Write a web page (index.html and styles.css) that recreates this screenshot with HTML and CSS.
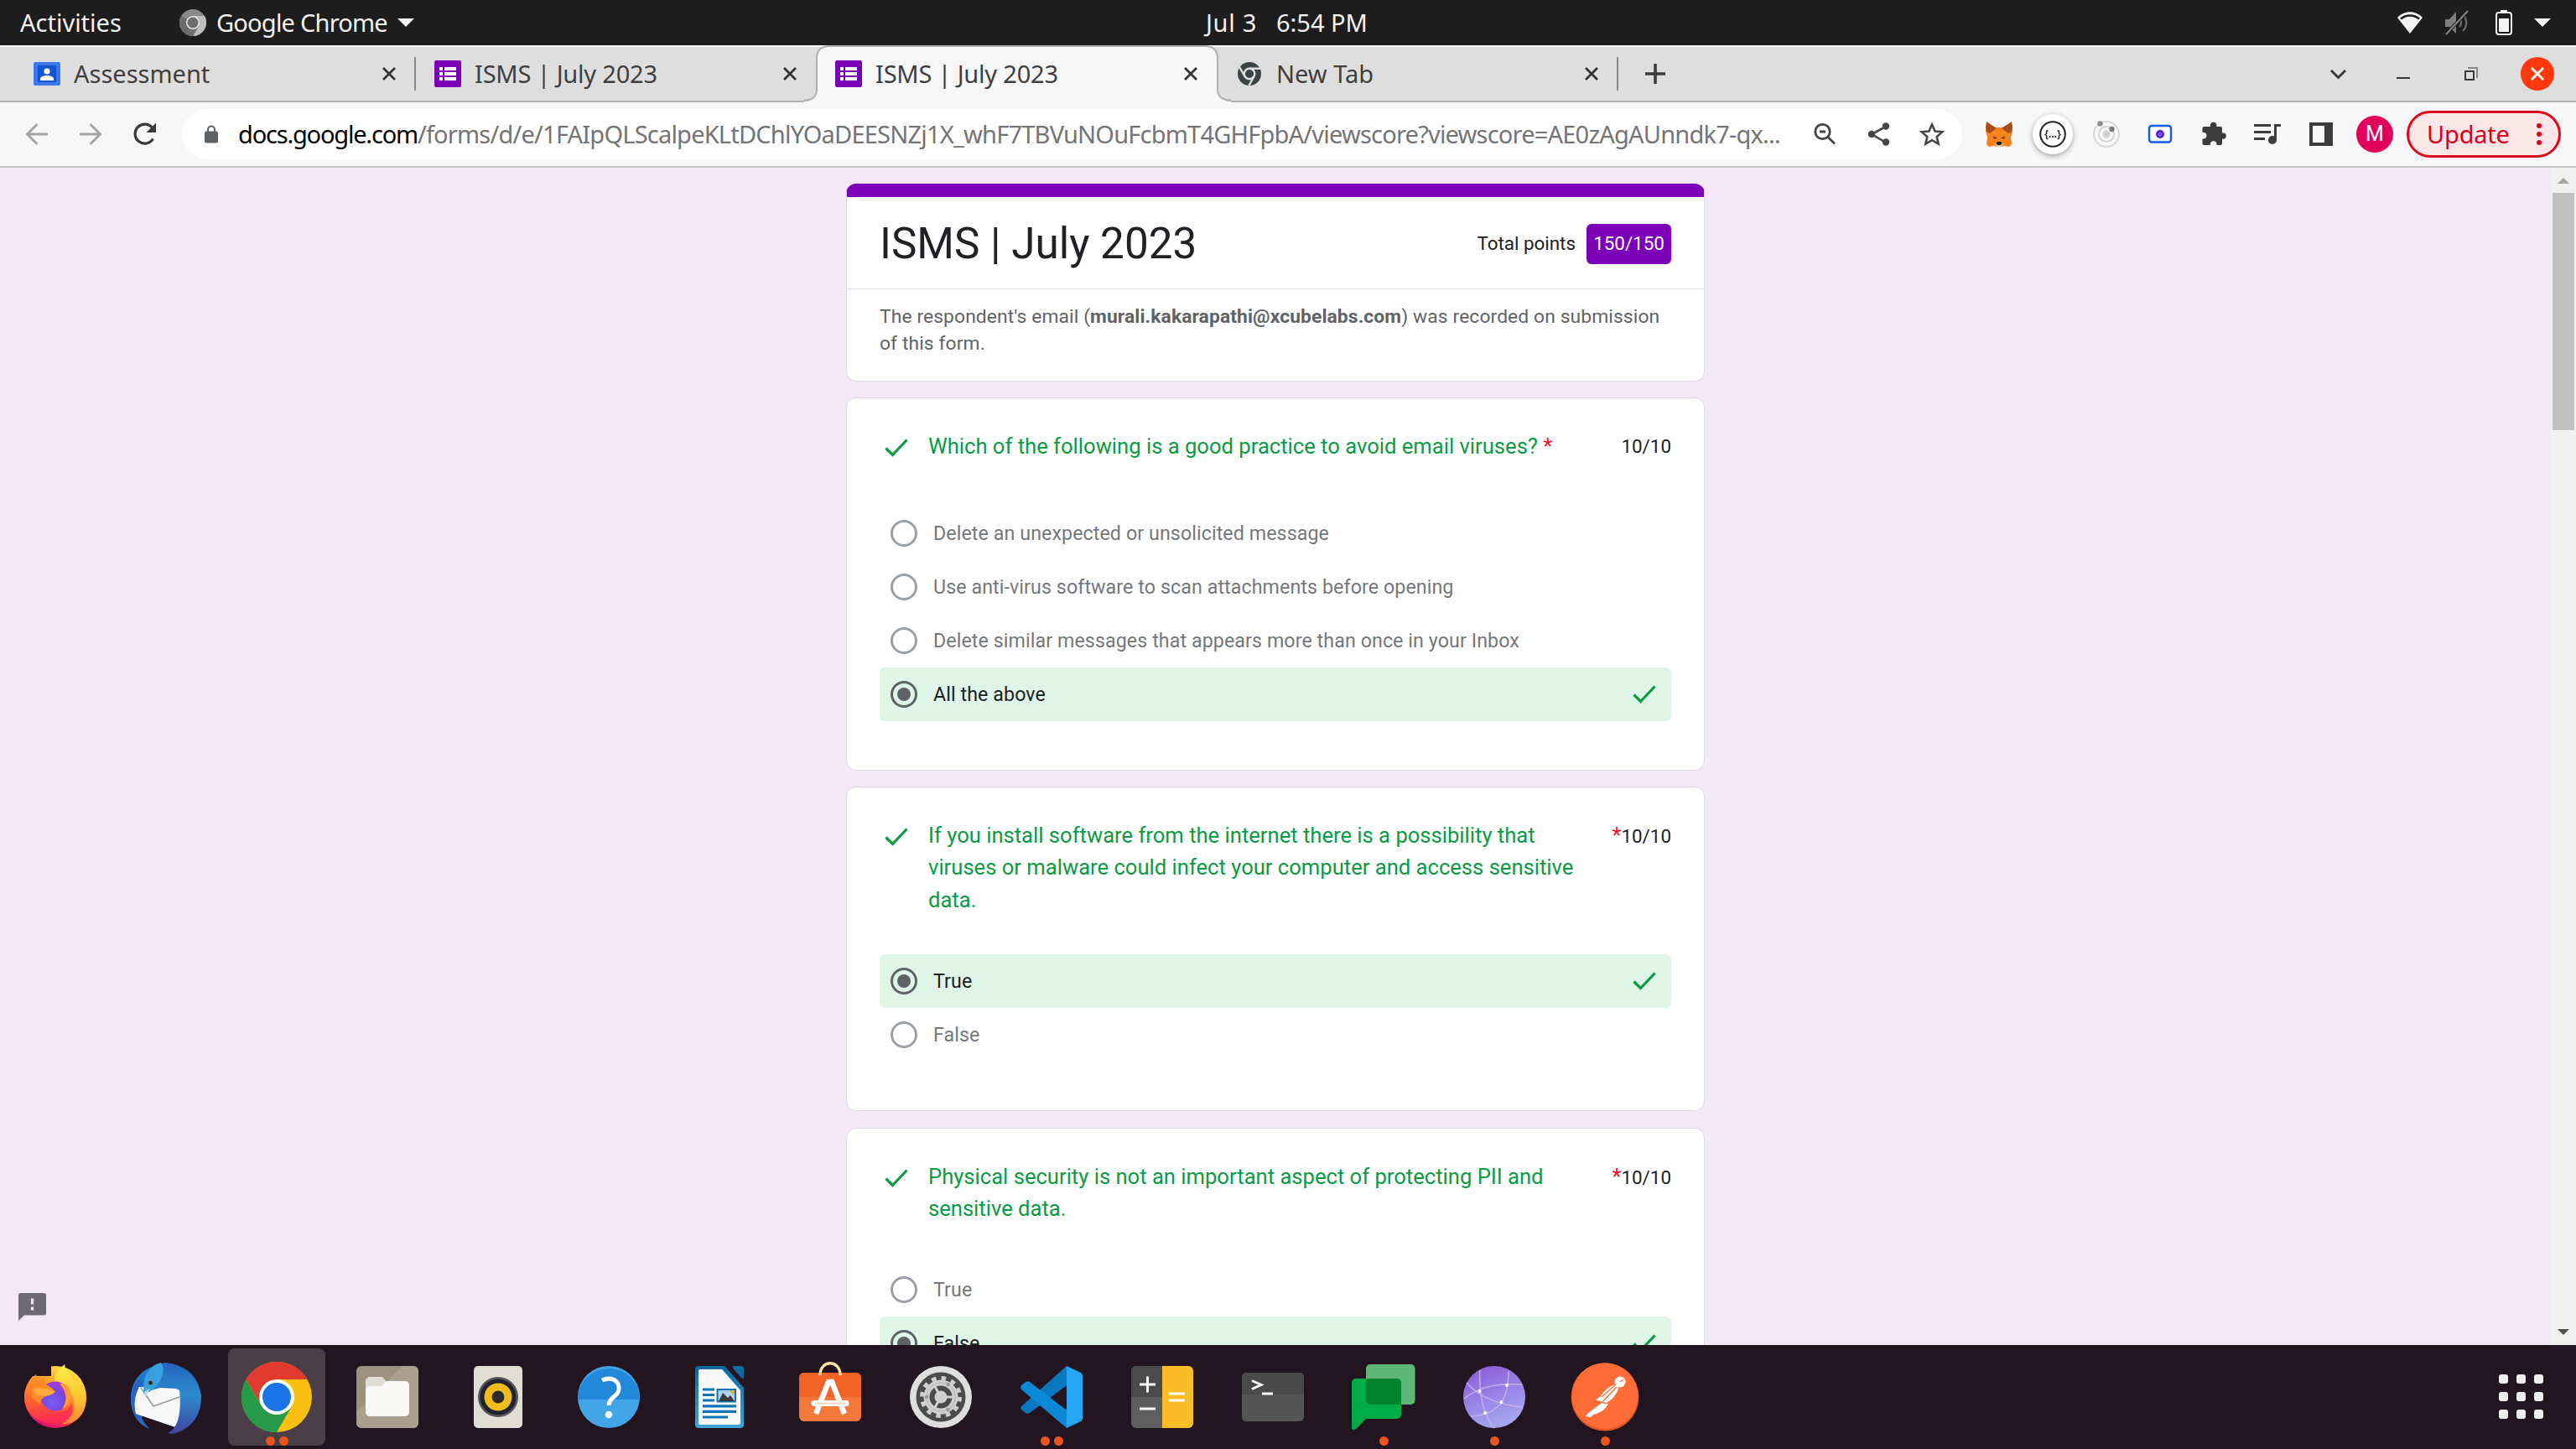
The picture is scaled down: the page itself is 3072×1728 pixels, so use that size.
FILE: index.html
```html
<!DOCTYPE html>
<html lang="en">
<head>
<meta charset="utf-8">
<title>ISMS | July 2023</title>
<link rel="stylesheet" href="styles.css">
</head>
<body>
<svg class="defs" width="0" height="0" aria-hidden="true">
  <defs>
    <symbol id="i-x" viewBox="0 0 18 18"><path d="M2 2l14 14M16 2L2 16" fill="none" stroke="currentColor" stroke-width="2.8"/></symbol>
    <symbol id="i-form" viewBox="0 0 32 32"><rect width="32" height="32" rx="2" fill="#7b00b8"/><path d="M6 8h4v4H6zM12 8h14v4H12zM6 14h4v4H6zM12 14h14v4H12zM6 20h4v4H6zM12 20h14v4H12z" fill="#fff"/></symbol>
    <symbol id="i-check" viewBox="0 0 28 22"><path d="M1.500 11.500l8 8L26.500 1.500" fill="none" stroke="#0b9b42" stroke-width="3.200"/></symbol>
    <symbol id="i-chrome" viewBox="-42 -42 84 84"><circle r="42" fill="#fbbf10"/><path d="M-36.400-21A42 42 0 0 1 36.400-21H0L-18.200 10.500Z" fill="#e23a2e"/><path d="M-36.400-21L-18.200 10.500H18.200L0 42A42 42 0 0 1-36.400-21Z" fill="#27994a"/><circle r="21" fill="#fff"/><circle r="17" fill="#1b73e8"/></symbol>
    <linearGradient id="g-fox" x1="0.800" y1="0" x2="0.300" y2="1"><stop offset="0" stop-color="#fff04a"/><stop offset=".35" stop-color="#ffa52c"/><stop offset=".7" stop-color="#ff4a3c"/><stop offset="1" stop-color="#e3067a"/></linearGradient>
    <linearGradient id="g-foxl" x1="0" y1="0" x2="0.200" y2="1"><stop offset="0" stop-color="#ffa41c"/><stop offset=".6" stop-color="#ff5a35"/><stop offset="1" stop-color="#ff2f52"/></linearGradient>
    <linearGradient id="g-flame" x1="0" y1="0" x2="0" y2="1"><stop offset="0" stop-color="#fff04c"/><stop offset=".6" stop-color="#ffc02e"/><stop offset="1" stop-color="#ff7d3c"/></linearGradient>
    <radialGradient id="g-globe" cx=".4" cy=".7" r=".8"><stop offset="0" stop-color="#7a5cf8"/><stop offset=".5" stop-color="#7447dc"/><stop offset="1" stop-color="#b833e0"/></radialGradient>
    <linearGradient id="g-bird" x1="0" y1="0" x2="1" y2="1"><stop offset="0" stop-color="#1f86d8"/><stop offset=".5" stop-color="#2160bd"/><stop offset="1" stop-color="#3b4aa5"/></linearGradient>
    <linearGradient id="g-wing" x1="0" y1="0" x2="0" y2="1"><stop offset="0" stop-color="#2563bd"/><stop offset=".45" stop-color="#2d8ccd"/><stop offset="1" stop-color="#4043a0"/></linearGradient>
    <linearGradient id="g-web" x1="0" y1="0" x2=".4" y2="1"><stop offset="0" stop-color="#8c55d9"/><stop offset="1" stop-color="#a3a5ee"/></linearGradient>
    <linearGradient id="g-doc" x1="0" y1="0" x2="0" y2="1"><stop offset="0" stop-color="#0b669f"/><stop offset="1" stop-color="#3fa4d6"/></linearGradient>
  </defs>
</svg>

<header class="panel">
  <span class="panel-activities">Activities</span>
  <svg class="panel-chrome" width="32" height="32" viewBox="-16 -16 32 32"><circle r="16" fill="#8a8a8a"/><path d="M0-8H13.900A16 16 0 0 1 0 16L7 4Z" fill="#bdbdbd"/><path d="M-13.900-8A16 16 0 0 0 0 16L7 4Z" fill="#6c6c6c"/><circle r="8" fill="#e6e6e6"/><circle r="6.500" fill="#6d6d6d"/></svg>
  <span class="panel-app">Google Chrome</span>
  <span class="triangle"></span>
  <span class="panel-clock"><span class="date">Jul 3</span><span class="time">6:54 PM</span></span>
  <span class="panel-status">
    <svg width="30" height="26" viewBox="0 0 30 26"><path d="M0 7C8-2 22-2 30 7L15 26Z" fill="#f2f2f2"/><path d="M4 8.500C10 3 20 3 26 8.500" fill="none" stroke="#1d1d1d" stroke-width="2.500"/></svg>
    <svg width="30" height="30" viewBox="0 0 30 30"><path d="M1 11h5l8-9v26l-8-8H1z" fill="#7d7d7d"/><path d="M18 10a7 7 0 0 1 0 10M22 5a14 14 0 0 1 0 20" fill="none" stroke="#6d6d6d" stroke-width="2.200"/><path d="M28 1L2 29" stroke="#1d1d1d" stroke-width="4"/><path d="M28 1L2 29" stroke="#858585" stroke-width="2"/></svg>
    <svg width="20" height="30" viewBox="0 0 20 30"><rect x="6" y="0" width="8" height="4" fill="#f2f2f2"/><rect x="1" y="3" width="18" height="26" rx="3" fill="none" stroke="#f2f2f2" stroke-width="2"/><rect x="4" y="10" width="12" height="16" fill="#f2f2f2"/></svg>
    <span class="triangle"></span>
  </span>
</header>

<nav class="tabs">
  <div class="tab">
    <svg class="fav" width="32" height="28" viewBox="0 0 32 28"><rect width="32" height="28" rx="2" fill="#3b78f0"/><rect x="5" y="4" width="22" height="20" fill="#1556d0"/><circle cx="16" cy="11" r="3.600" fill="#fff"/><path d="M8 22v-2c0-3 5-4 8-4s8 1 8 4v2z" fill="#fff"/></svg>
    <span class="tab-title">Assessment</span>
    <svg class="tab-x" width="18" height="18"><use href="#i-x"/></svg>
    <i class="sep"></i>
  </div>
  <div class="tab">
    <svg class="fav" width="32" height="32"><use href="#i-form"/></svg>
    <span class="tab-title tight">ISMS | July 2023</span>
    <svg class="tab-x" width="18" height="18"><use href="#i-x"/></svg>
  </div>
  <div class="tab tab-on">
    <svg class="tab-shape" width="510" height="68" viewBox="0 0 510 68"><path d="M0 67C12 67 15 61 15 52V16C15 6 20 1 30 1H478C488 1 493 6 493 16V52C493 61 497 67 509 67V68H0Z" fill="#f7f7f7"/><path d="M0 65.500C12 65.500 15 60 15 52V16C15 6 20 1 30 1H478C488 1 493 6 493 16V52C493 60 497 65.500 509 65.500" fill="none" stroke="#b0b0b0" stroke-width="2"/></svg>
    <svg class="fav" width="32" height="32"><use href="#i-form"/></svg>
    <span class="tab-title tight">ISMS | July 2023</span>
    <svg class="tab-x" width="18" height="18"><use href="#i-x"/></svg>
  </div>
  <div class="tab tab-new">
    <svg class="fav" width="28" height="28" viewBox="-14 -14 28 28"><circle r="14" fill="#3c4345"/><circle r="6.300" fill="none" stroke="#dedede" stroke-width="2.400"/><path d="M0-6.300H13.500M-5.500 3.200L-12.200-8.500M5.500 3.200L-.5 13.800" stroke="#dedede" stroke-width="2.400"/></svg>
    <span class="tab-title">New Tab</span>
    <svg class="tab-x" width="18" height="18"><use href="#i-x"/></svg>
    <i class="sep"></i>
  </div>
  <svg class="plus" width="24" height="24" viewBox="0 0 24 24"><path d="M12 0v24M0 12h24" stroke="#3a3a3a" stroke-width="3.600"/></svg>
  <div class="win">
    <svg width="78" height="40" viewBox="0 0 78 40"><path d="M30 16l8.500 8.500L47 16" fill="none" stroke="#3a3a3a" stroke-width="3"/></svg>
    <svg width="78" height="40" viewBox="0 0 78 40"><path d="M30 25h16" stroke="#3a3a3a" stroke-width="2"/></svg>
    <svg width="80" height="40" viewBox="0 0 80 40"><path d="M37 13h11v12" fill="none" stroke="#888" stroke-width="2"/><rect x="34" y="17" width="10" height="10" fill="none" stroke="#3a3a3a" stroke-width="2"/></svg>
    <svg class="win-close" width="40" height="40" viewBox="-20 -20 40 40"><circle r="20" fill="#ff370d"/><path d="M-7-7L7 7M7-7L-7 7" stroke="#fff" stroke-width="2.800"/></svg>
  </div>
</nav>

<div class="toolbar">
  <div class="nav-buttons">
    <svg width="64" height="40" viewBox="0 0 64 40"><path d="M46 20H22M33.500 8L21.500 20l12 12" fill="none" stroke="#a3a3a3" stroke-width="2.800"/></svg>
    <svg width="64" height="40" viewBox="0 0 64 40"><path d="M20 20H44M32.500 8l12 12-12 12" fill="none" stroke="#a3a3a3" stroke-width="2.800"/></svg>
    <svg width="64" height="40" viewBox="0 0 64 40"><path d="M43.500 25.500A11.500 11.500 0 1 1 43 13" fill="none" stroke="#3a3a3a" stroke-width="3.200"/><path d="M47 6.500V18H35.500Z" fill="#3a3a3a"/></svg>
  </div>
  <div class="omnibox">
    <svg class="lock" width="16" height="22" viewBox="0 0 16 22"><rect y="7.500" width="16" height="14" rx="2" fill="#5c6266"/><path d="M4 9V5.500a4 4 0 0 1 8 0V9" fill="none" stroke="#5c6266" stroke-width="2"/></svg>
    <span class="url"><span class="host">docs.google.com</span>/forms/d/e/1FAIpQLScalpeKLtDChlYOaDEESNZj1X_whF7TBVuNOuFcbmT4GHFpbA/viewscore?viewscore=AE0zAgAUnndk7-qx...</span>
    <span class="omni-icons">
      <svg width="64" height="40" viewBox="0 0 64 40"><circle cx="29.500" cy="17" r="8.700" fill="none" stroke="#454545" stroke-width="2.800"/><path d="M36 23.500l8 8M26 17h7" stroke="#454545" stroke-width="2.800"/></svg>
      <svg width="64" height="40" viewBox="0 0 64 40"><path d="M41 11L24 20l17 10" fill="none" stroke="#454545" stroke-width="2.600"/><circle cx="41" cy="10.500" r="4.200" fill="#454545"/><circle cx="24" cy="20" r="4.200" fill="#454545"/><circle cx="41" cy="29.500" r="4.200" fill="#454545"/></svg>
      <svg width="64" height="40" viewBox="0 0 64 40"><path d="M32 8.500l3.600 8 8.700.8-6.600 5.800 2 8.600L32 27.200l-7.700 4.500 2-8.600-6.600-5.800 8.700-.8z" fill="none" stroke="#454545" stroke-width="2.600"/></svg>
    </span>
  </div>
  <div class="extensions">
    <svg width="64" height="64" viewBox="0 0 64 64"><path d="M17 20L28 24h8L47 18l1 10-2 8 1 8-3 3-6-1-3 1h-6l-3-1-6 1-3-3 1-8-2-8z" fill="#f5841f"/><path d="M17 17l12 8-8 6-4-2-1-5zM47 17l-12 8 8 6 4-2 1-5z" fill="#a84c1c"/><path d="M17 41l7-2 3 5-7 2.500zM47 41l-7-2-3 5 7 2.500z" fill="#ff7e0d"/><path d="M25 34l5 3-4 1zM39 34l-5 3 4 1z" fill="#8c3a1c"/><path d="M27 44l2-3h6l2 3-2 3h-6z" fill="#d8c1b0"/><path d="M29.500 41h5l1 2.500-2 1.500h-3l-2-1.500z" fill="#1c1712"/></svg>
    <svg class="ring" width="64" height="64" viewBox="0 0 64 64"><circle cx="32" cy="32" r="24" fill="#fff"/><circle cx="32" cy="32" r="14.800" fill="none" stroke="#222" stroke-width="2"/><text x="32" y="36" font-size="13" textLength="20" text-anchor="middle" class="braces">{...}</text></svg>
    <svg width="64" height="64" viewBox="0 0 64 64"><circle cx="32" cy="32" r="15" fill="none" stroke="#d6d6d6" stroke-width="2"/><circle cx="32" cy="32" r="9" fill="none" stroke="#d3d3d3" stroke-width="2"/><circle cx="32" cy="32" r="4.500" fill="#d0d0d0"/><circle cx="24.500" cy="19.500" r="3.200" fill="#8e8e8e"/><circle cx="38.500" cy="26" r="3.200" fill="#7a7a7a"/></svg>
    <svg width="64" height="64" viewBox="0 0 64 64"><rect x="19" y="22" width="26" height="19.500" rx="3" fill="#fff" stroke="#1259f5" stroke-width="2.400"/><circle cx="32" cy="32" r="5" fill="#4d1fd8"/><circle cx="32" cy="32" r="2.600" fill="#7a52e6"/></svg>
    <svg width="64" height="64" viewBox="0 0 64 64"><path d="M20.500 23h7.500v-1.500a3.700 3.700 0 0 1 7.400 0V23H40a2 2 0 0 1 2 2v5.500h1.200a3.600 3.600 0 0 1 0 7.200H42V43a2 2 0 0 1-2 2h-4.500v-1a3.800 3.800 0 0 0-7.600 0v1H20.500a2 2 0 0 1-2-2v-5.500h1.200a3.700 3.700 0 0 0 0-7.400H18.500V25a2 2 0 0 1 2-2z" fill="#3c3c3c"/></svg>
    <svg width="64" height="64" viewBox="0 0 64 64"><path d="M16 21.500h20M16 29.500h20M16 37.500h13" stroke="#3c3c3c" stroke-width="3"/><circle cx="38" cy="39" r="5" fill="#3c3c3c"/><path d="M41.500 39V21.500H48" fill="none" stroke="#3c3c3c" stroke-width="3"/></svg>
    <svg width="64" height="64" viewBox="0 0 64 64"><path fill-rule="evenodd" d="M18 18h28v28H18zM22 22v20h14V22z" fill="#3c3c3c"/></svg>
  </div>
  <span class="avatar">M</span>
  <button class="update">Update<span class="dots"><i></i><i></i><i></i></span></button>
</div>

<main class="page">
  <div class="feedback"><svg width="34" height="34" viewBox="0 0 34 34"><path d="M2.500 0h28a2.500 2.500 0 0 1 2.500 2.500V24a2.500 2.500 0 0 1-2.500 2.500H7L0 33V2.500A2.500 2.500 0 0 1 2.500 0z" fill="#6e6a73"/><path d="M16.500 6.500v7M16.500 16.500v4" stroke="#f3e8f8" stroke-width="3.200"/></svg></div>
  <div class="form">
    <section class="card head">
      <div class="head-top">
        <h1>ISMS | July 2023</h1>
        <span class="total">Total points</span>
        <span class="badge">150/150</span>
      </div>
      <p class="note">The respondent's email (<b>murali.kakarapathi@xcubelabs.com</b>) was recorded on submission<br>of this form.</p>
    </section>

    <section class="card">
      <div class="q"><svg class="mark" width="28" height="22"><use href="#i-check"/></svg><h2>Which of the following is a good practice to avoid email viruses? <em>*</em></h2><span class="score">10/10</span></div>
      <ul class="opts opts-1">
        <li><i class="radio"></i>Delete an unexpected or unsolicited message</li>
        <li><i class="radio"></i>Use anti-virus software to scan attachments before opening</li>
        <li><i class="radio"></i>Delete similar messages that appears more than once in your Inbox</li>
        <li class="right"><i class="radio on"></i>All the above<svg class="tick" width="28" height="22"><use href="#i-check"/></svg></li>
      </ul>
    </section>

    <section class="card">
      <div class="q"><svg class="mark" width="28" height="22"><use href="#i-check"/></svg><h2>If you install software from the internet there is a possibility that<br>viruses or malware could infect your computer and access sensitive<br>data.</h2><span class="score"><em>*</em>10/10</span></div>
      <ul class="opts opts-2">
        <li class="right"><i class="radio on"></i>True<svg class="tick" width="28" height="22"><use href="#i-check"/></svg></li>
        <li><i class="radio"></i>False</li>
      </ul>
    </section>

    <section class="card">
      <div class="q"><svg class="mark" width="28" height="22"><use href="#i-check"/></svg><h2>Physical security is not an important aspect of protecting PII and<br>sensitive data.</h2><span class="score"><em>*</em>10/10</span></div>
      <ul class="opts opts-3">
        <li><i class="radio"></i>True</li>
        <li class="right"><i class="radio on"></i>False<svg class="tick" width="28" height="22"><use href="#i-check"/></svg></li>
      </ul>
    </section>
  </div>
  <div class="scrollbar"><i class="up"></i><i class="thumb"></i><i class="down"></i></div>
</main>

<footer class="dock">
  <div class="app"><svg viewBox="0 0 132 124"><circle cx="66" cy="62" r="37" fill="url(#g-fox)"/><path d="M29 62a37 37 0 0 1 10-25h22V25h46v-6H20v45z" fill="#22151f"/><path d="M65 46C64 36 70 29 77 23c1 8 7 13 13 20 1-1 3 0 3 5l2-9c3 4 3 8 5 12 9 24-6 45-26 43 14-8 18-20 12-34-4-9-12-13-21-14z" fill="url(#g-flame)"/><path d="M29 62c0-12 6-19 14-27l1 9 9-6 .5 9c5 6 8 20 12 32 10 2 17-2 20-10 4 18-8 24-20 24C43 93 29 80 29 62z" fill="url(#g-foxl)"/><circle cx="66" cy="61" r="17.500" fill="url(#g-globe)"/><path d="M74 50c6 8 6 18 0 26 10-3 13-15 8-25-3-5-6-5-11-5z" fill="#ff9a32"/><path d="M39 50c5-5 9-5 14-3 6 1 10 5 13 9-4 4-9 4-13 6-4 2-5 5-5 9l-10-8z" fill="#ff8a26"/><path d="M39 53c9-3 18-1 27 2.500-3 3.500-8 4-13 5.500-7-1-11-2-14-8z" fill="#ffab3c"/></svg></div>
  <div class="app"><svg viewBox="0 0 132 124"><path d="M24 65C24 41 38 26 62 23 90 21 108 40 108 64c0 22-14 38-38 42l7-9-40-7c-8-6-13-15-13-25z" fill="url(#g-bird)"/><path d="M30 84l47 14-31 4C37 98 33 92 30 84z" fill="#22133a"/><path d="M38 84l38 14-24 8-14-6z" fill="#22151f"/><path d="M24 65c0 14 7 30 23 35-6-5-10-11-12-20l-5-18 9-20C31 38 24 50 24 65z" fill="#2a63c0"/><path d="M34 50l48 2c5 13 4 32-5 46L30 82c-3-12-1-22 4-32z" fill="#f7f7f7"/><path d="M36 51l15 22 31-11" fill="none" stroke="#999" stroke-width="1.600"/><path d="M40 59C38 40 45 26 64 21c22 1 40 16 44 40-1 23-12 40-34 45l-6-1c11-4 17-22 14-51-11-6-22-4-33 0z" fill="url(#g-wing)"/><path d="M40 57C37 38 46 24 60 21c6 8 2 22-10 32z" fill="#38a0dd"/><path d="M40 56l7-4-6 10z" fill="#b5e2ef"/><circle cx="47.500" cy="45" r="2.600" fill="#17253c" stroke="#8c7738"/></svg></div>
  <div class="app app-on"><svg viewBox="0 0 132 124"><use href="#i-chrome" x="24" y="20" width="84" height="84"/></svg><span class="run"><i></i><i></i></span></div>
  <div class="app"><svg viewBox="0 0 132 124"><rect x="29" y="25" width="74" height="74" rx="6" fill="#9c927f"/><path d="M84 25h13a6 6 0 0 1 6 6v62a6 6 0 0 1-6 6H35a6 6 0 0 1-6-6V80z" fill="#aaa08d"/><path d="M40 52V43a5 5 0 0 1 5-5h15l6 7v12H40z" fill="#e2ded4"/><path d="M45 49h14l6-6h22a5 5 0 0 1 5 5v32a5 5 0 0 1-5 5H45a5 5 0 0 1-5-5V54a5 5 0 0 1 5-5z" fill="#f8f8f7"/></svg></div>
  <div class="app"><svg viewBox="0 0 132 124"><rect x="37" y="25" width="58" height="74" rx="5" fill="#e2ded3"/><circle cx="66" cy="62" r="24" fill="#55575d"/><circle cx="66" cy="62" r="21.500" fill="#20222c"/><circle cx="66" cy="62" r="16.500" fill="#f0bb1c"/><circle cx="66" cy="62" r="7.500" fill="#2b2b2b"/></svg></div>
  <div class="app"><svg viewBox="0 0 132 124"><circle cx="66" cy="62" r="37" fill="#42a5e6"/><path d="M29 65a37 37 0 1 1 74 0z" fill="#2289da"/><path d="M58 42c12-5 21 1 20 11-1 9-12 9-12 19" fill="none" stroke="#fff" stroke-width="5"/><circle cx="66" cy="83" r="4.300" fill="#fff"/></svg></div>
  <div class="app"><svg viewBox="0 0 132 124"><path d="M41 25h31l23 26v44a4 4 0 0 1-4 4H41a4 4 0 0 1-4-4V29a4 4 0 0 1 4-4z" fill="url(#g-doc)"/><path d="M82 25h10a3 3 0 0 1 3 3v12c-2 0-3-1-4-2l-8-9c-1-1-1-3-1-4z" fill="#0e6aa2"/><path d="M43 29h26l22 25v38a3 3 0 0 1-3 3H43a2 2 0 0 1-2-2V31a2 2 0 0 1 2-2z" fill="#f8f8f8"/><path d="M46 53h14M46 59.500h14M46 66h14M46 72.800h40M46 79.400h40M46 86h30" stroke="#0c75b5" stroke-width="3.200"/><rect x="63.500" y="53" width="21.500" height="14.500" fill="#a9d5f2" stroke="#0c75b5" stroke-width="2"/><path d="M79 54h5v5c-3 0-5-2-5-5z" fill="#e8b71e"/><path d="M65 67l5-10 6 6 3-3 5 7z" fill="#3a3a3a"/></svg></div>
  <div class="app"><svg viewBox="0 0 132 124"><rect x="29" y="33" width="74" height="58" rx="6" fill="#f4773c"/><path d="M29 62V39a6 6 0 0 1 6-6h62a6 6 0 0 1 6 6v23z" fill="#f36328"/><path d="M54 36c0-19 24-19 24 0" fill="none" stroke="#fde0a6" stroke-width="3.400"/><path d="M49 82L64 44h4l15 38" fill="none" stroke="#fff" stroke-width="6.500"/><path d="M47 69.500h38" stroke="#fff" stroke-width="7" stroke-linecap="round"/><path d="M48 69.500h36" stroke="#fbd5c5" stroke-width="2"/></svg></div>
  <div class="app"><svg viewBox="0 0 132 124"><circle cx="66" cy="62" r="37" fill="#dedede"/><circle cx="66" cy="62" r="29.500" fill="#4b4b4b"/><circle cx="66" cy="62" r="22.500" fill="none" stroke="#d0d0d0" stroke-width="5" stroke-dasharray="5.500 6.280"/><circle cx="66" cy="62" r="17" fill="none" stroke="#cfcfcf" stroke-width="7"/><circle cx="66" cy="62" r="17" fill="none" stroke="#b5b5b5" stroke-width="1"/><circle cx="66" cy="62" r="7.500" fill="#cfcfcf"/><path d="M66 62h16M66 62l-8-14M66 62l-8 14" stroke="#cfcfcf" stroke-width="3"/><circle cx="49" cy="62" r="2.200" fill="#999"/><circle cx="74.500" cy="47" r="2.200" fill="#999"/><circle cx="74.500" cy="77" r="2.200" fill="#999"/></svg></div>
  <div class="app"><svg viewBox="0 0 132 124"><path d="M84 25L30 73c-1 1-1 3 0 4l5 4c2 1 3 1 5 0L87 46z" fill="#0a76bd"/><path d="M30 48l5-4c2-1 4-1 5 0l47 36-3 19L30 53c-1-2-1-4 0-5z" fill="#0b89d6"/><path d="M84 25l17 8c1 1 2 2 2 4v50c0 2-1 3-2 4l-17 8z" fill="#26a5f1"/></svg><span class="run"><i></i><i></i></span></div>
  <div class="app"><svg viewBox="0 0 132 124"><rect x="29" y="25" width="74" height="74" rx="6" fill="#5e5e5e"/><path d="M29 62V31a6 6 0 0 1 6-6h31v37z" fill="#4b4b4b"/><path d="M66 25h31a6 6 0 0 1 6 6v62a6 6 0 0 1-6 6H66z" fill="#fbbd27"/><path d="M39 47h19M48.500 37.500v19M39 76h19M74 58h19M74 66h19" stroke="#fff" stroke-width="3"/></svg></div>
  <div class="app"><svg viewBox="0 0 132 124"><rect x="29" y="33" width="74" height="58" rx="5" fill="#555"/><path d="M29 59V38a5 5 0 0 1 5-5h64a5 5 0 0 1 5 5v21z" fill="#4a4a4a"/><path d="M41 42.500l11 5-11 5M53 58h13" fill="none" stroke="#fff" stroke-width="3"/></svg></div>
  <div class="app"><svg viewBox="0 0 132 124"><rect x="45" y="23" width="58.500" height="48" rx="5" fill="#5db876"/><path d="M33 40h49a5 5 0 0 1 5 5v38a5 5 0 0 1-5 5H45L33 100c-2 2-5 1-5-1V45a5 5 0 0 1 5-5z" fill="#00ac47"/><path d="M45 40h37a5 5 0 0 1 5 5v26H50a5 5 0 0 1-5-5z" fill="#00832d"/></svg><span class="run"><i></i></span></div>
  <div class="app"><svg viewBox="0 0 132 124"><circle cx="66" cy="62" r="37" fill="url(#g-web)"/><path d="M49 30c-2 22 3 54 17 69M33 45c13 15 35 26 67 29M30 64c20-16 42-18 69-17M83 31c0 26-5 52-45 54" fill="none" stroke="#c6b0ef" stroke-width="1.400"/><g fill="#fff"><circle cx="48.500" cy="55" r="2"/><circle cx="81" cy="48" r="2"/><circle cx="74.500" cy="68" r="2"/><circle cx="55" cy="81" r="2"/></g></svg><span class="run"><i></i></span></div>
  <div class="app"><svg viewBox="0 0 132 124"><circle cx="66" cy="62" r="40.500" fill="#e2541f"/><circle cx="66" cy="60.800" r="39.500" fill="#ff6c37"/><circle cx="84" cy="44" r="6.500" fill="#fff"/><path d="M78 47l4 4c-2 9-8 14-14 18l-7-1-6-3 6-4c3-6 9-11 17-14z" fill="#fff"/><path d="M62 69l8 1c-4 7-9 11-18 13l-3 3-6-1 2-3z" fill="#fff"/><path d="M84 44l4-3M80 50L63 68M79 47L62 62M58 67l10 3" stroke="#ff6c37" stroke-width="1.300"/></svg><span class="run"><i></i></span></div>
  <svg class="grid" width="54" height="54" viewBox="0 0 54 54"><g fill="#eeeeec"><rect width="11" height="11" rx="3"/><rect x="21" width="11" height="11" rx="3"/><rect x="42" width="11" height="11" rx="3"/><rect y="21" width="11" height="11" rx="3"/><rect x="21" y="21" width="11" height="11" rx="3"/><rect x="42" y="21" width="11" height="11" rx="3"/><rect y="42" width="11" height="11" rx="3"/><rect x="21" y="42" width="11" height="11" rx="3"/><rect x="42" y="42" width="11" height="11" rx="3"/></g></svg>
</footer>
</body>
</html>
```
FILE: styles.css
```css
* { box-sizing: border-box; }
body { margin: 0; width: 3072px; height: 1728px; overflow: hidden; display: flex; flex-direction: column; background: #f4e8f8; font-family: Roboto, "Liberation Sans", sans-serif; }
svg { display: block; flex: none; }
.defs { position: absolute; }
em { font-style: normal; color: #f2112b; }

/* system panel */
.panel { flex: none; height: 54px; background: #1d1d1d; color: #f2f2f2; display: flex; align-items: center; padding: 0 30px 0 24px; font: 29px/54px "Noto Sans", sans-serif; white-space: nowrap; }
.panel-activities { width: 190px; }
.panel-chrome { margin-right: 12px; }
.panel-app { width: 216px; letter-spacing: -.78px; }
.triangle { width: 0; height: 0; border: 10px solid transparent; border-top-color: #f2f2f2; border-bottom: 0; }
.panel-clock { display: flex; gap: 23px; margin-left: 944px; }
.date { letter-spacing: .7px; }
.panel-status { margin-left: auto; display: flex; align-items: center; }
.panel-status svg + svg { margin-left: 26px; }
.panel-status svg:nth-child(3) { margin-left: 31px; }
.panel-status .triangle { margin-left: 26px; }

/* tab strip */
.tabs { flex: none; height: 68px; background: #dedede; border-top: 2px solid #fff; border-bottom: 2px solid #b0b0b0; display: flex; align-items: center; padding-left: 18px; font: 29px/40px "Noto Sans", sans-serif; color: #3f3f3f; }
.tab { position: relative; width: 478px; height: 64px; display: flex; align-items: center; padding: 0 23px 0 22px; white-space: nowrap; }
.tab-title { margin-left: 16px; flex: 1; }
.tight { letter-spacing: -.2px; }
.tab-x { color: #333; }
.sep { position: absolute; right: 0; top: 12px; width: 2px; height: 40px; background: #8a8a8a; }
.tab-shape { position: absolute; left: -15px; top: -2px; }
.tab-on .fav, .tab-on .tab-title, .tab-on .tab-x { position: relative; }
.tab-new { padding-left: 24px; }
.tab-new .tab-title { margin-left: 18px; }
.plus { margin-left: 32px; }
.win { margin-left: auto; margin-right: 26px; display: flex; }
.win-close { margin-left: 20px; }

/* toolbar */
.toolbar { flex: none; height: 78px; background: #f7f7f7; border-bottom: 2px solid #c3c3c6; display: flex; align-items: center; padding-left: 11px; }
.nav-buttons { display: flex; }
.omnibox { width: 2123px; height: 60px; margin-left: 14px; border-radius: 30px; background: #fff; display: flex; align-items: center; padding: 0 4px 0 27px; }
.lock { margin-right: 24px; }
.url { flex: 1 1 0; min-width: 0; font: 29px/60px "Noto Sans", sans-serif; letter-spacing: -.79px; white-space: nowrap; color: #747474; }
.host { color: #000; letter-spacing: -1.200px; }
.omni-icons { display: flex; }
.extensions { display: flex; margin-left: 12px; }
.ring { overflow: visible; filter: drop-shadow(0 2px 3px rgba(0,0,0,.35)); }
.braces { font-family: "Noto Sans", sans-serif; font-weight: 600; fill: #222; }
.avatar { width: 44px; height: 44px; border-radius: 50%; background: #e0005c; color: #fff; font: 25px/44px Roboto, sans-serif; text-align: center; margin-left: 10px; }
.update { width: 184px; height: 56px; margin-left: 16px; padding: 0 20px 0 21px; border: 3px solid #dd0a1e; border-radius: 28px; background: #fae6e7; color: #d9001b; font: 29px/50px "Noto Sans", sans-serif; letter-spacing: -.2px; display: flex; align-items: center; justify-content: space-between; }
.dots { display: flex; flex-direction: column; gap: 4px; }
.dots i { width: 6px; height: 6px; border-radius: 50%; background: #e60023; }

/* form page */
.page { flex: none; height: 1404px; overflow: hidden; display: flex; }
.feedback { width: 1009px; padding: 1342px 0 0 22px; }
.form { width: 1024px; padding-top: 19px; display: flex; flex-direction: column; gap: 19px; }
.card { flex: none; background: #fff; border: 1px solid #dadce0; border-radius: 12px; }
.card:nth-child(2) { height: 445px; }
.card:nth-child(3) { height: 387px; }
.card:nth-child(4) { height: 400px; margin-top: 1px; }
.head { height: 236px; border-top: 16px solid #7b00b8; }
.head-top { height: 110px; border-bottom: 1px solid #dadce0; display: flex; align-items: center; padding: 2px 39px 0; }
h1 { margin: 0; flex: 1; font-weight: 400; font-size: 51.200px; line-height: 64px; color: #202124; white-space: nowrap; }
.total { font-size: 22.400px; line-height: 26px; padding-bottom: 2px; color: #202124; margin-right: 13px; }
.badge { height: 48px; border-radius: 6px; background: #7b00b8; color: #fff; font-size: 22.400px; line-height: 46px; padding: 0 8px; width: 101px; text-align: center; }
.note { margin: 17px 0 0 39px; font-size: 22.800px; line-height: 32px; letter-spacing: .12px; color: #5f6368; white-space: nowrap; }
.q { display: flex; padding: 38px 39px 0 45px; }
.mark { margin: 10px 24px 0 0; }
h2 { margin: 0; flex: 1; font-weight: 400; font-size: 25.600px; line-height: 38.400px; color: #0b9b42; white-space: nowrap; }
.score { font-size: 22.400px; line-height: 38.400px; color: #202124; white-space: nowrap; }
.score em { font-size: 25.600px; }
.opts { list-style: none; margin: 0 39px; padding: 0; }
.opts-1 { margin-top: 52.600px; }
.opts-2 { margin-top: 46px; }
.opts-3 { margin-top: 45px; }
.opts li { height: 64px; border-radius: 6px; display: flex; align-items: center; padding: 0 18px 0 13px; font-size: 23.200px; letter-spacing: .1px; color: #74787c; white-space: nowrap; }
.opts .right { background: #dff5e8; color: #202124; }
.radio { flex: none; width: 32px; height: 32px; margin-right: 19px; border-radius: 50%; border: 3.200px solid #9aa0a6; display: flex; align-items: center; justify-content: center; }
.on { border-color: #5f6368; }
.on::after { content: ""; width: 16px; height: 16px; border-radius: 50%; background: #5f6368; }
.tick { margin-left: auto; }
.scrollbar { width: 30px; margin-left: auto; background: #f0f0f0; display: flex; flex-direction: column; align-items: center; }
.up, .down { width: 0; height: 0; border: 7px solid transparent; }
.up { margin-top: 12px; border-top: 0; border-bottom-color: #a3a3a3; }
.thumb { margin-top: 11px; width: 26px; height: 283px; background: #c1c1c1; }
.down { margin-top: auto; margin-bottom: 12px; border-bottom: 0; border-top-color: #505050; }

/* dock */
.dock { flex: none; height: 124px; background: #22151f; display: flex; }
.app { position: relative; width: 132px; height: 124px; }
.app > svg { position: relative; width: 132px; height: 124px; }
.app-on::before { content: ""; position: absolute; left: 8px; top: 4px; width: 116px; height: 116px; border-radius: 8px; background: #4b3f47; }
.run { position: absolute; left: 0; right: 0; bottom: 4px; display: flex; justify-content: center; gap: 5px; }
.run i { width: 11px; height: 11px; border-radius: 50%; background: #e95420; }
.grid { margin: 35px 38px 0 auto; }
```
